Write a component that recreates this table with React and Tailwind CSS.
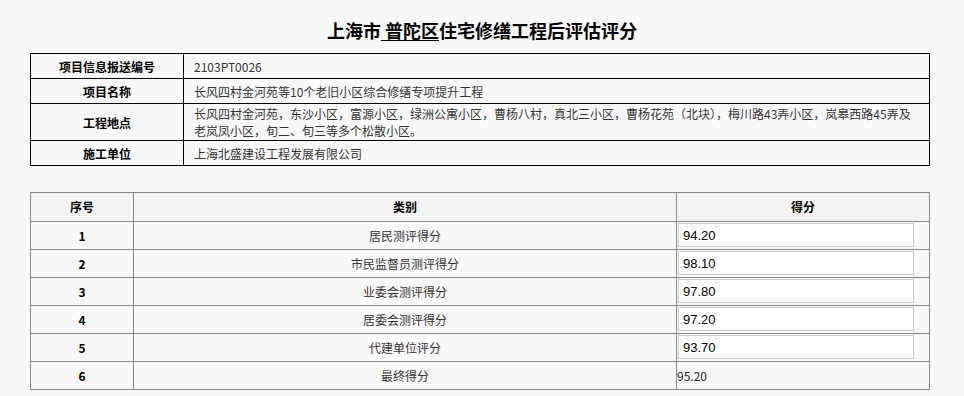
import React from 'react';

// 项目基本信息
const info = [
  { label: '项目信息报送编号', value: '2103PT0026' },
  { label: '项目名称', value: '长风四村金河苑等10个老旧小区综合修缮专项提升工程' },
  {
    label: '工程地点',
    value:
      '长风四村金河苑，东沙小区，富源小区，绿洲公寓小区，曹杨八村，真北三小区，曹杨花苑（北块），梅川路43弄小区，岚皋西路45弄及老岚凤小区，旬二、旬三等多个松散小区。',
  },
  { label: '施工单位', value: '上海北盛建设工程发展有限公司' },
];

// 评分明细
const scores = [
  { no: 1, name: '居民测评得分', score: '94.20' },
  { no: 2, name: '市民监督员测评得分', score: '98.10' },
  { no: 3, name: '业委会测评得分', score: '97.80' },
  { no: 4, name: '居委会测评得分', score: '97.20' },
  { no: 5, name: '代建单位评分', score: '93.70' },
];

const App = () => {
  return (
    <div className="min-h-[396px] bg-[#f9f9f9] font-['Noto_Sans_CJK_SC',sans-serif] text-[12px] text-[#222]">
      {/* 标题 */}
      <h1 className="pt-[19px] h-[53px] text-center text-[18px] leading-[22px] font-bold text-black">
        上海市<span className="underline underline-offset-2"> 普陀区</span>住宅修缮工程后评估评分
      </h1>

      {/* 项目信息 */}
      <table className="ml-[30px] w-[900px] border-collapse table-fixed">
        <colgroup>
          <col className="w-[153px]" />
          <col />
        </colgroup>
        <tbody>
          {info.map((row) => (
            <tr key={row.label} className="h-[25px]">
              <td className="border border-black text-center font-bold text-black leading-[17px] py-[1px]">
                {row.label}
              </td>
              <td className="border border-black pl-[10px] pr-[8px] leading-[17px] py-[1px] text-[#333]">
                {row.value}
              </td>
            </tr>
          ))}
        </tbody>
      </table>

      {/* 评分表 */}
      <table className="ml-[30px] mt-[26px] w-[900px] border-collapse table-fixed">
        <colgroup>
          <col className="w-[103px]" />
          <col className="w-[543px]" />
          <col />
        </colgroup>
        <thead>
          <tr className="h-[29px] bg-[#f3f3f3]">
            <th className="border border-[#888] font-bold text-black">序号</th>
            <th className="border border-[#888] font-bold text-black">类别</th>
            <th className="border border-[#888] font-bold text-black">得分</th>
          </tr>
        </thead>
        <tbody>
          {scores.map((s) => (
            <tr key={s.no} className="h-[28px]">
              <td className="border border-[#888] text-center font-bold text-black">{s.no}</td>
              <td className="border border-[#888] text-center text-[#333]">{s.name}</td>
              <td className="border border-[#888] pl-[1px] pt-[1px] pb-[2px]">
                <input
                  readOnly
                  value={s.score}
                  className="block w-[236px] h-[24px] bg-white border border-[#ccc] pl-[4px] font-['Liberation_Sans',Arial,sans-serif] text-[13px] text-black outline-none"
                />
              </td>
            </tr>
          ))}
          <tr className="h-[28px]">
            <td className="border border-[#888] text-center font-bold text-black">6</td>
            <td className="border border-[#888] text-center text-[#333]">最终得分</td>
            <td className="border border-[#888] text-[#222]">95.20</td>
          </tr>
        </tbody>
      </table>
    </div>
  );
};

export default App;
